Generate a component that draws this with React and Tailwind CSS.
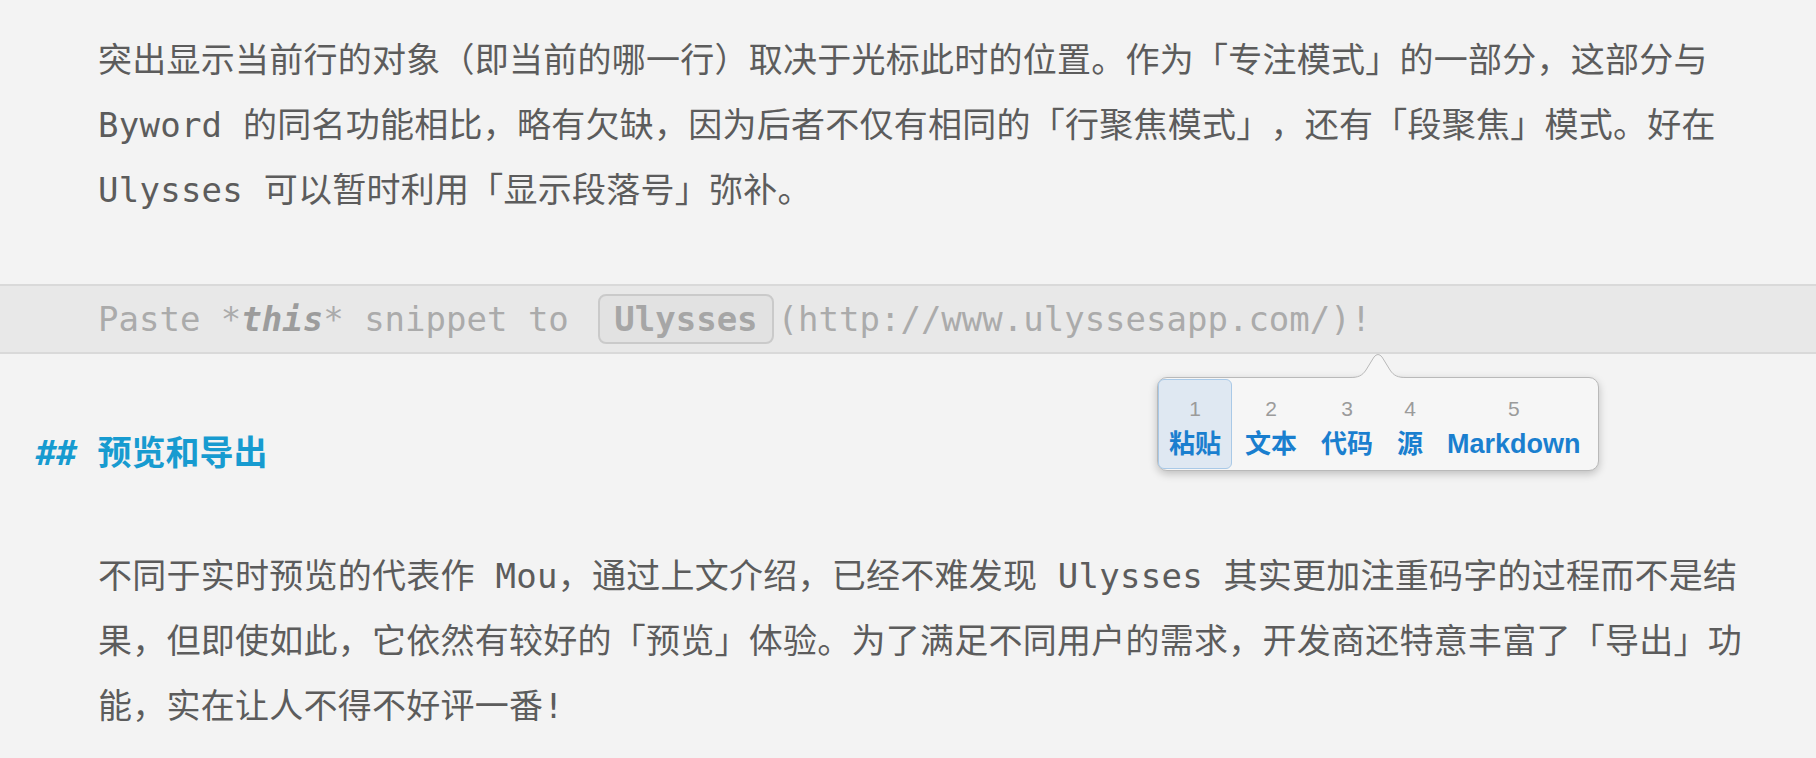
import React from 'react'

const mono = { fontFamily: '"DejaVu Sans Mono", "Noto Sans CJK SC", monospace' }

function Line({ children }) {
  return <div className="h-[65px] leading-[65px] whitespace-nowrap">{children}</div>
}

const items = [
  { n: '1', label: '粘贴', active: true },
  { n: '2', label: '文本' },
  { n: '3', label: '代码' },
  { n: '4', label: '源' },
  { n: '5', label: 'Markdown', big: true },
]

function PastePopup() {
  return (
    <div className="absolute left-[1157px] top-[377px] w-[442px] h-[94px] rounded-[10px] border border-[#b9b9b9] bg-[#f6f6f6] shadow-[0_3px_8px_rgba(0,0,0,0.22)] tracking-normal">
      {/* arrow pointing at the cursor */}
      <svg className="absolute left-[192px] top-[-25px]" width="56" height="27" viewBox="0 0 56 27">
        <path d="M0,24.5 C8,24.5 12,23 16,17 L24,4 Q28,-1 32,4 L40,17 C44,23 48,24.5 56,24.5 L56,27 L0,27 Z" fill="#f6f6f6" />
        <path d="M0,24.5 C8,24.5 12,23 16,17 L24,4 Q28,-1 32,4 L40,17 C44,23 48,24.5 56,24.5" fill="none" stroke="#b9b9b9" strokeWidth="1" />
      </svg>
      <div className="flex gap-[2px] pt-[1px]">
        {items.map(it => (
          <div
            key={it.n}
            className={`h-[90px] flex flex-col items-center px-[10px] pt-[16px] rounded-[6px] border ${it.active ? 'bg-[#dfe8f2] border-[#a9c9e7]' : 'border-transparent'}`}
            style={{ fontFamily: '"Liberation Sans", "Noto Sans CJK SC", sans-serif' }}
          >
            <div className="text-[21px] leading-[26px] text-[#9b9b9b]">{it.n}</div>
            <div className={`mt-[7px] leading-[30px] font-bold text-[#1a7fcf] whitespace-nowrap ${it.big ? 'text-[27px]' : 'text-[26px]'}`}>{it.label}</div>
          </div>
        ))}
      </div>
    </div>
  )
}

export default function App() {
  return (
    <div className="relative w-[1816px] h-[758px] overflow-hidden bg-[#f3f3f3] text-[34px] text-[#5c5c5c] tracking-[0.25px] [text-spacing-trim:space-all]" style={mono}>
      <div className="pt-[28px] pl-[98px]">
        <Line>突出显示当前行的对象（即当前的哪一行）取决于光标此时的位置。作为「专注模式」的一部分，这部分与</Line>
        <Line>Byword 的同名功能相比，略有欠缺，因为后者不仅有相同的「行聚焦模式」，还有「段聚焦」模式。好在</Line>
        <Line>Ulysses 可以暂时利用「显示段落号」弥补。</Line>
      </div>

      <div className="mt-[61px] h-[70px] border-y-2 border-[#d9d9d9] bg-[#e8e8e8] flex items-center pl-[98px] text-[#ababab] whitespace-nowrap tracking-normal">
        <span className="whitespace-pre">Paste *</span>
        <span className="font-bold italic text-[#9c9c9c]">this</span>
        <span className="whitespace-pre">* snippet to </span>
        <span className="ml-[9px] h-[50px] px-[14px] flex items-center rounded-[8px] border-2 border-[#cacaca] bg-[#e2e2e2] font-bold text-[#a6a6a6]">Ulysses</span>
        <span className="ml-[4px]">(http://www.ulyssesapp.com/)!</span>
      </div>

      <div className="mt-[64px] h-[65px] leading-[65px] pl-[36px] text-[#179bd0] whitespace-pre tracking-normal">
        <span className="font-bold italic">## </span>
        <span className="font-semibold" style={{ fontFamily: '"Noto Sans CJK SC", sans-serif' }}>预览和导出</span>
      </div>

      <div className="mt-[61px] pl-[98px]">
        <Line>不同于实时预览的代表作 Mou，通过上文介绍，已经不难发现 Ulysses 其实更加注重码字的过程而不是结</Line>
        <Line>果，但即使如此，它依然有较好的「预览」体验。为了满足不同用户的需求，开发商还特意丰富了「导出」功</Line>
        <Line>能，实在让人不得不好评一番!</Line>
      </div>

      <PastePopup />
    </div>
  )
}
